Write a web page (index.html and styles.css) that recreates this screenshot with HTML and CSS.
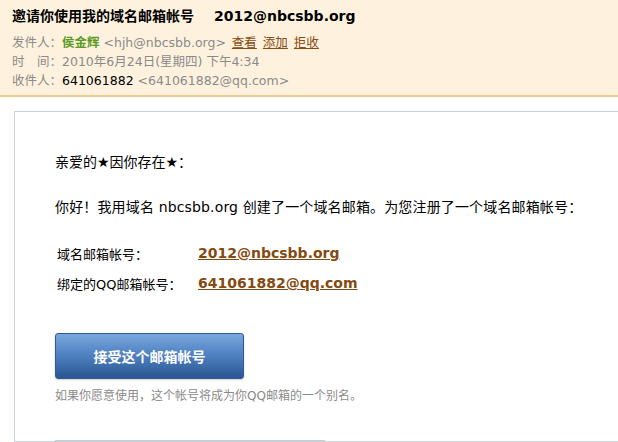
FILE: index.html
```html
<!DOCTYPE html>
<html lang="zh-CN">
<head>
  <meta charset="UTF-8" />
  <title>邀请你使用我的域名邮箱帐号</title>
  <link rel="stylesheet" href="styles.css">
</head>
<body>

<div class="mail-head">
  <h1 class="subject">邀请你使用我的域名邮箱帐号<span class="subject-addr">2012@nbcsbb.org</span></h1>
  <div class="meta">
    发件人：<span class="sender">侯金辉</span> &lt;hjh@nbcsbb.org&gt;
    <a href="#">查看</a> <a href="#">添加</a> <a href="#">拒收</a>
  </div>
  <div class="meta">时　间：2010年6月24日(星期四) 下午4:34</div>
  <div class="meta">收件人：<span class="dark">641061882</span> &lt;641061882@qq.com&gt;</div>
</div>

<div class="card">
  <p class="greeting">亲爱的★因你存在★：</p>
  <p class="intro">你好！我用域名 nbcsbb.org 创建了一个域名邮箱。为您注册了一个域名邮箱帐号：</p>

  <table class="accounts">
    <tr>
      <td class="label">域名邮箱帐号：</td>
      <td><a href="#">2012@nbcsbb.org</a></td>
    </tr>
    <tr>
      <td class="label">绑定的QQ邮箱帐号：</td>
      <td><a href="#">641061882@qq.com</a></td>
    </tr>
  </table>

  <button class="accept">接受这个邮箱帐号</button>
  <p class="note">如果你愿意使用，这个帐号将成为你QQ邮箱的一个别名。</p>
  <hr class="divider">
</div>

</body>
</html>
```

FILE: styles.css
```css
body {
  margin: 0;
  font-family: "DejaVu Sans", "Noto Sans CJK SC", sans-serif;
  background-color: #ffffff;
  color: #000000;
  overflow: hidden;
}

.mail-head {
  background-color: #fef2df;
  border-bottom: 2px solid #ebc98f;
  padding: 4px 12px 5px;
}

.subject {
  margin: 0 0 5px;
  font-size: 14px;
  line-height: 24px;
  font-weight: bold;
  white-space: nowrap;
}

.subject-addr {
  padding-left: 20px;
}

.meta {
  font-size: 12.5px;
  line-height: 19px;
  color: #8a8a8a;
  white-space: nowrap;
}

.meta .sender {
  color: #5a9a1f;
  font-weight: bold;
}

.meta .dark {
  color: #000000;
}

.meta a {
  color: #8a4a12;
  text-decoration: underline;
  margin-left: 2px;
}

.card {
  margin: 14px 0 0 14px;
  border: 1px solid #cbd2dc;
  border-right: none;
  padding: 40px 0 0 40px;
}

.card p {
  margin: 0;
}

.greeting, .intro {
  font-size: 14px;
  line-height: 20px;
}

.intro {
  margin-top: 25px !important;
  white-space: nowrap;
  letter-spacing: 0.15px;
}

.accounts {
  margin-top: 21px;
  border-collapse: collapse;
}

.accounts td {
  padding: 0;
  height: 30px;
  font-size: 13px;
  vertical-align: middle;
}

.accounts .label {
  width: 141px;
  padding-left: 2px;
}

.accounts a {
  color: #844a12;
  font-weight: bold;
  font-size: 14px;
  text-decoration: underline;
}

.accept {
  display: block;
  margin-top: 35px;
  width: 189px;
  height: 46px;
  border: 1px solid #2f5a92;
  border-radius: 3px;
  background: linear-gradient(#7aa7de, #5183c2 45%, #2a5693);
  color: #ffffff;
  font-family: inherit;
  font-size: 14px;
  font-weight: bold;
  box-shadow: 0 1px 2px rgba(0, 0, 0, 0.2);
}

.note {
  margin-top: 7px !important;
  font-size: 12px;
  line-height: 20px;
  color: #8a8a8a;
}

.divider {
  margin: 34px 0 0;
  width: 270px;
  border: none;
  border-top: 1px solid #c8ccd0;
}
```
